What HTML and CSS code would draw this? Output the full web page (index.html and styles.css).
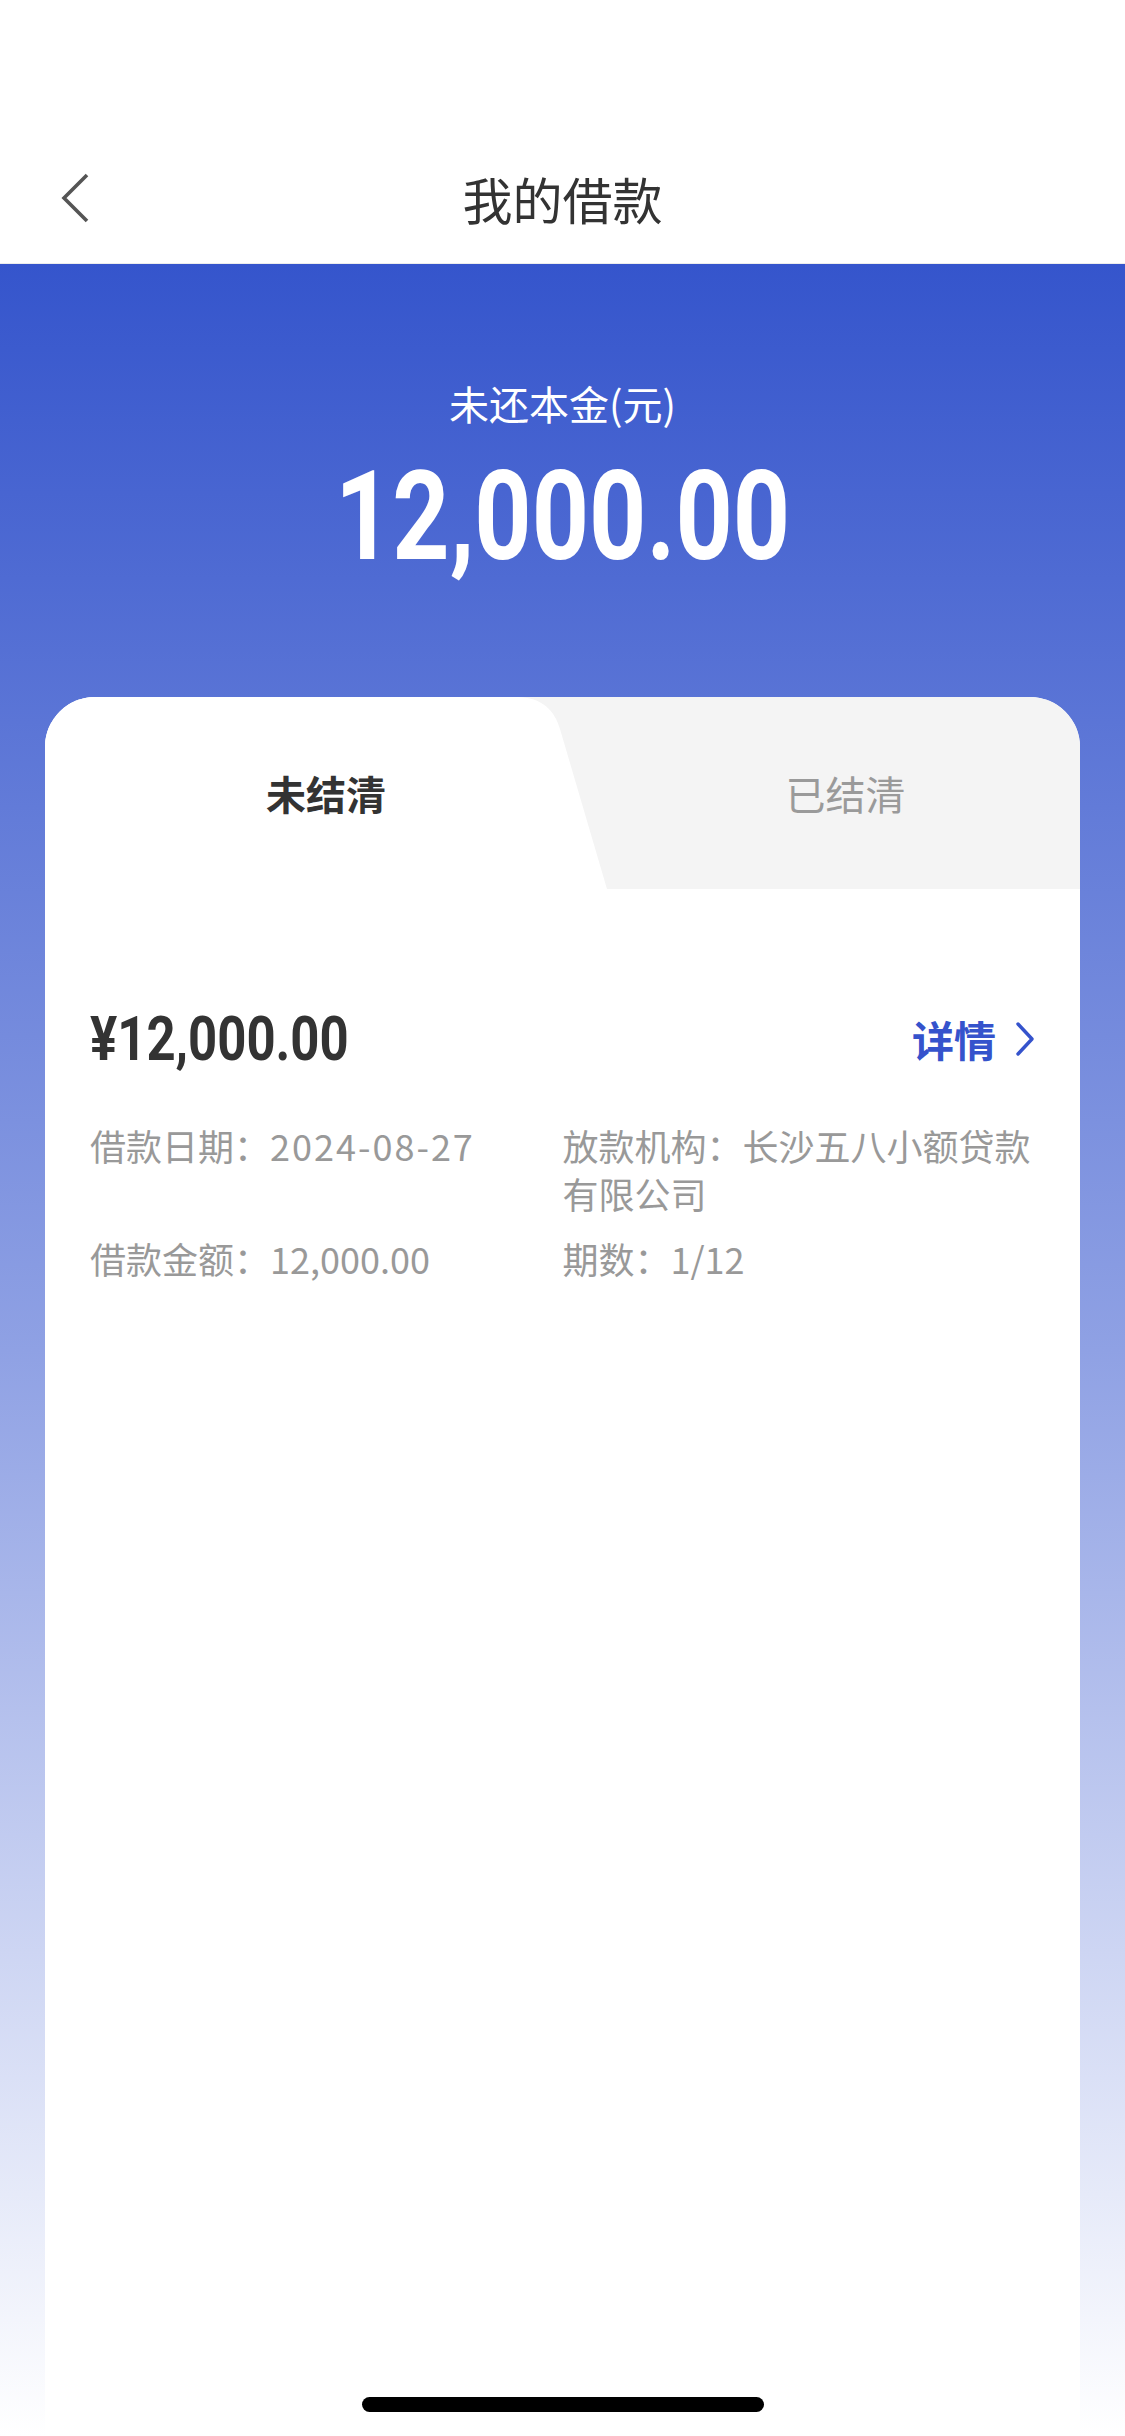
FILE: index.html
```html
<!DOCTYPE html>
<html lang="zh-CN">
<head>
<meta charset="utf-8">
<title>我的借款</title>
<link rel="stylesheet" href="styles.css">
</head>
<body>
<div class="screen">
  <header class="topbar">
    <div class="nav">
      <button class="back" aria-label="返回">
        <svg width="30" height="50" viewBox="0 0 30 50"><path d="M27 2 L4 25 L27 48" fill="none" stroke="#555" stroke-width="3.6" stroke-linejoin="miter"/></svg>
      </button>
      <h1 class="title">我的借款</h1>
      <span class="nav-spacer"></span>
    </div>
  </header>
  <main class="main">
    <section class="summary">
      <div class="summary-label">未还本金(元)</div>
      <div class="summary-amount"><span class="summary-num">12,000.00</span></div>
    </section>
    <section class="card">
      <div class="tabs">
        <div class="tab tab-active">未结清</div>
        <div class="tab tab-inactive">已结清</div>
      </div>
      <div class="loan">
        <div class="loan-head">
          <span class="loan-amount">¥12,000.00</span>
          <a class="loan-more">详情<svg width="24" height="36" viewBox="0 0 24 36"><path d="M5 3 L19 18 L5 33" fill="none" stroke="#3553cc" stroke-width="3.4" stroke-linecap="round" stroke-linejoin="round"/></svg></a>
        </div>
        <div class="loan-grid">
          <div class="loan-field">借款日期：<span class="date">2024-08-27</span></div>
          <div class="loan-field">放款机构：长沙五八小额贷款有限公司</div>
          <div class="loan-field">借款金额：12,000.00</div>
          <div class="loan-field">期数：1/12</div>
        </div>
      </div>
    </section>
  </main>
  <div class="home-indicator"></div>
</div>
</body>
</html>
```
FILE: styles.css
```css
* { box-sizing: border-box; }
html, body { margin: 0; padding: 0; }
body {
  font-family: "Noto Sans CJK SC", "Noto Sans", sans-serif;
  background: #fff;
}
.screen {
  position: relative;
  width: 1125px;
  height: 2436px;
  display: flex;
  flex-direction: column;
  overflow: hidden;
}
.topbar {
  height: 264px;
  padding-top: 132px;
  background: #fff;
  border-bottom: 1px solid #ececec;
}
.nav {
  height: 131px;
  display: grid;
  grid-template-columns: 1fr auto 1fr;
  align-items: center;
}
.back {
  justify-self: start;
  margin-left: 60px;
  padding: 0;
  border: 0;
  background: none;
  display: flex;
  width: 30px;
  height: 50px;
}
.title {
  margin: 0;
  font-size: 50px;
  font-weight: 400;
  color: #333;
  line-height: 70px;
}
.main {
  flex: 1;
  display: flex;
  flex-direction: column;
  background: linear-gradient(180deg, #3555cc 0%, #8fa1e4 50%, #ffffff 100%);
}
.summary {
  padding-top: 111px;
  text-align: center;
  color: #fff;
}
.summary-label {
  font-size: 40px;
  line-height: 56px;
}
.summary-amount {
  margin-top: 16px;
  height: 140px;
  line-height: 140px;
}
.summary-num {
  display: inline-block;
  font-family: Roboto, "Liberation Sans", sans-serif;
  font-weight: 700;
  font-size: 125px;
  transform: scaleX(0.8);
}
.card {
  flex: 1;
  margin: 110px 45px 0;
  background: #fff;
  border-radius: 50px 50px 0 0;
  overflow: hidden;
}
.tabs {
  display: flex;
  height: 192px;
  background: #f4f4f4;
}
.tab {
  display: flex;
  align-items: center;
  justify-content: center;
  font-size: 40px;
}
.tab-active {
  width: 562px;
  background: #fff;
  color: #333;
  font-weight: 700;
  clip-path: path("M0 0 H472 C497 0 510 14 515 32 L562 192 H0 Z");
}
.tab-inactive {
  flex: 1;
  color: #9a9a9a;
  font-weight: 400;
  padding-left: 4px;
}
.loan {
  padding: 110px 45px 0;
}
.loan-head {
  display: flex;
  align-items: center;
  justify-content: space-between;
  height: 80px;
}
.loan-amount {
  display: inline-block;
  font-family: Roboto, "Liberation Sans", sans-serif;
  font-weight: 700;
  font-size: 62px;
  line-height: 80px;
  color: #333;
  transform: scaleX(0.82);
  transform-origin: left center;
}
.loan-more {
  display: flex;
  align-items: center;
  gap: 17px;
  font-size: 42px;
  font-weight: 700;
  color: #3553cc;
  line-height: 80px;
  margin-right: -2px;
}
.loan-grid {
  margin-top: 42px;
  display: grid;
  grid-template-columns: 1fr 1fr;
  row-gap: 17px;
  font-size: 36px;
  line-height: 48px;
  color: #999;
}
.date {
  letter-spacing: 2px;
}
.home-indicator {
  position: absolute;
  left: 362px;
  bottom: 24px;
  width: 402px;
  height: 15px;
  border-radius: 8px;
  background: #000;
}
```
